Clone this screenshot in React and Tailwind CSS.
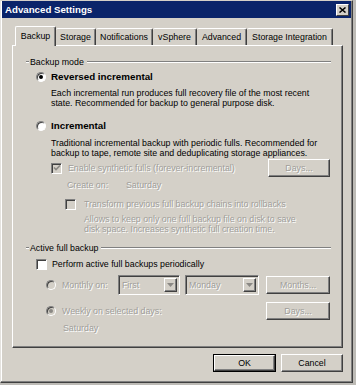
import React from 'react';

const dis = "text-[#a09e9a] [text-shadow:1px_1px_0_#ffffff]";

function Radio({ checked, disabled }) {
  return (
    <span className={"inline-flex items-center justify-center w-[10px] h-[10px] rounded-full border border-t-[#808080] border-l-[#808080] border-b-white border-r-white shadow-[inset_1px_1px_0_#404040] " + (disabled ? "bg-[#d4d0c8]" : "bg-white")}>
      {checked && <span className={"w-[4px] h-[4px] rounded-full " + (disabled ? "bg-[#8a8884]" : "bg-black")} />}
    </span>
  );
}

function Check({ checked, disabled }) {
  return (
    <span className={"inline-flex items-center justify-center w-[11px] h-[11px] border border-t-[#808080] border-l-[#808080] border-b-white border-r-white shadow-[inset_1px_1px_0_#404040] " + (disabled ? "bg-[#d4d0c8]" : "bg-white")}>
      {checked && (
        <svg width="8" height="8" viewBox="0 0 8 8">
          <path d="M1 3.5 L3 5.5 L7 1.5" fill="none" stroke={disabled ? "#8a8884" : "#000"} strokeWidth="1.6" />
        </svg>
      )}
    </span>
  );
}

function Btn({ children, w, disabled, def }) {
  const inner = (
    <div className={"h-full flex items-center justify-center bg-[#d4d0c8] border border-t-white border-l-white border-r-[#404040] border-b-[#404040] shadow-[inset_-1px_-1px_0_#808080] " + (disabled ? dis : "text-black")}>
      {children}
    </div>
  );
  return (
    <div className={"h-[18px] " + w + (def ? " border border-black" : "")}>{inner}</div>
  );
}

function Combo({ value, w }) {
  return (
    <div className={"h-[20px] flex bg-[#d4d0c8] border border-t-[#808080] border-l-[#808080] border-b-white border-r-white shadow-[inset_1px_1px_0_#404040] pl-[3px] pr-[2px] py-[2px] " + w}>
      <div className={"flex-1 flex items-center " + dis}>{value}</div>
      <div className="w-[13px] flex items-center justify-center border border-t-white border-l-white border-r-[#404040] border-b-[#404040] shadow-[inset_-1px_-1px_0_#808080]">
        <svg width="7" height="4" viewBox="0 0 7 4"><path d="M0 0 H7 L3.5 4 Z" fill="#8a8884" /></svg>
      </div>
    </div>
  );
}

function Group({ label }) {
  return (
    <div className="h-[12px] ml-[13px] mr-[11px] flex items-center">
      <div className="w-[3px] h-[2px] border-t border-t-[#808080] border-b border-b-white" />
      <span className="px-[1px]">{label}</span>
      <div className="flex-1 h-[2px] border-t border-t-[#808080] border-b border-b-white ml-[2px]" />
    </div>
  );
}

const tabs = [
  ["Backup", "w-[41px]"],
  ["Storage", "w-[40px]"],
  ["Notifications", "w-[57px]"],
  ["vSphere", "w-[44px]"],
  ["Advanced", "w-[50px]"],
  ["Storage Integration", "w-[86px]"],
];

export default function App() {
  return (
    <div className="w-[356px] h-[385px] bg-[#bdbbb6] overflow-hidden font-['Liberation_Sans',Arial,sans-serif] text-[8.8px] leading-[10px] text-black">
      <div className="w-[353px] h-[383px] bg-[#d4d0c8] border-l border-l-[#e4e2de] border-t border-t-[#d4d0c8] border-r border-r-[#404040] border-b border-b-[#404040] shadow-[inset_-1px_-1px_0_#808080,inset_1px_1px_0_#ffffff] flex flex-col">
        {/* title bar */}
        <div className="h-[17px] mx-[1px] bg-[#0a246a] flex items-center justify-between pl-[3px] pr-[2px]">
          <span className="text-white font-bold text-[9.7px]">Advanced Settings</span>
          <div className="w-[13px] h-[12px] bg-[#d4d0c8] border border-t-white border-l-white border-r-[#404040] border-b-[#404040] flex items-center justify-center">
            <svg width="7" height="6" viewBox="0 0 7 6"><path d="M0.5 0.5 L6.5 5.5 M6.5 0.5 L0.5 5.5" stroke="#000" strokeWidth="1.5" /></svg>
          </div>
        </div>

        {/* tabs */}
        <div className="h-[19px] mt-[8px] ml-[14px] flex items-end">
          {tabs.map(([t, w], i) => (
            <div key={t} className={"flex items-center justify-center bg-[#d4d0c8] border-t border-l border-t-white border-l-white border-r border-r-[#404040] rounded-t-[2px] shadow-[inset_-1px_0_0_#808080] " + w + (i === 0 ? " h-[20px] -mb-[1px] relative z-10 pb-[2px]" : " h-[17px] border-l-0")}>
              {t}
            </div>
          ))}
        </div>

        {/* panel */}
        <div className="ml-[11px] w-[331px] h-[303px] flex flex-col border-t border-l border-t-white border-l-white border-r border-b border-r-[#404040] border-b-[#404040] shadow-[inset_-1px_-1px_0_#808080]">
          <div className="mt-[10px]"><Group label="Backup mode" /></div>

          <div className="mt-[3px] h-[12px] ml-[23px] flex items-center gap-[5px]">
            <Radio checked />
            <span className="font-bold text-[9.8px]">Reversed incremental</span>
          </div>
          <div className="mt-[5px] h-[20px] ml-[38px]">
            Each incremental run produces full recovery file of the most recent<br />
            state. Recommended for backup to general purpose disk.
          </div>

          <div className="mt-[12px] h-[12px] ml-[23px] flex items-center gap-[5px]">
            <Radio />
            <span className="font-bold text-[9.8px]">Incremental</span>
          </div>
          <div className="mt-[6px] h-[20px] ml-[38px]">
            Traditional incremental backup with periodic fulls. Recommended for<br />
            backup to tape, remote site and deduplicating storage appliances.
          </div>

          <div className="h-[20px] ml-[38px] mr-[12px] flex items-center">
            <Check checked disabled />
            <span className={"ml-[6px] flex-1 " + dis}>Enable synthetic fulls (forever-incremental)</span>
            <Btn w="w-[62px]" disabled>Days...</Btn>
          </div>
          <div className={"mt-[1px] h-[12px] ml-[54px] flex items-center " + dis}>
            <span className="w-[59px]">Create on:</span>
            <span>Saturday</span>
          </div>

          <div className="mt-[7px] h-[12px] ml-[52px] flex items-center">
            <Check disabled />
            <span className={"ml-[8px] " + dis}>Transform previous full backup chains into rollbacks</span>
          </div>
          <div className={"mt-[4px] h-[20px] ml-[71px] " + dis}>
            Allows to keep only one full backup file on disk to save<br />
            disk space. Increases synthetic full creation time.
          </div>

          <div className="mt-[8px]"><Group label="Active full backup" /></div>

          <div className="mt-[4px] h-[12px] ml-[23px] flex items-center gap-[5px]">
            <Check />
            <span>Perform active full backups periodically</span>
          </div>

          <div className="mt-[4px] h-[21px] ml-[33px] mr-[12px] flex items-center">
            <Radio disabled />
            <span className={"ml-[6px] w-[56px] " + dis}>Monthly on:</span>
            <Combo value="First" w="w-[62px]" />
            <div className="w-[5px]" />
            <Combo value="Monday" w="w-[74px]" />
            <div className="flex-1" />
            <Btn w="w-[64px]" disabled>Months...</Btn>
          </div>

          <div className="mt-[6px] h-[19px] ml-[33px] mr-[12px] flex items-center">
            <Radio checked disabled />
            <span className={"ml-[6px] flex-1 " + dis}>Weekly on selected days:</span>
            <Btn w="w-[64px]" disabled>Days...</Btn>
          </div>
          <div className={"mt-[2px] h-[12px] ml-[50px] flex items-center " + dis}>Saturday</div>
        </div>

        {/* footer */}
        <div className="mt-[6px] flex justify-end pr-[9px] gap-[5px]">
          <Btn w="w-[63px]" def>OK</Btn>
          <Btn w="w-[62px]">Cancel</Btn>
        </div>
      </div>
    </div>
  );
}
